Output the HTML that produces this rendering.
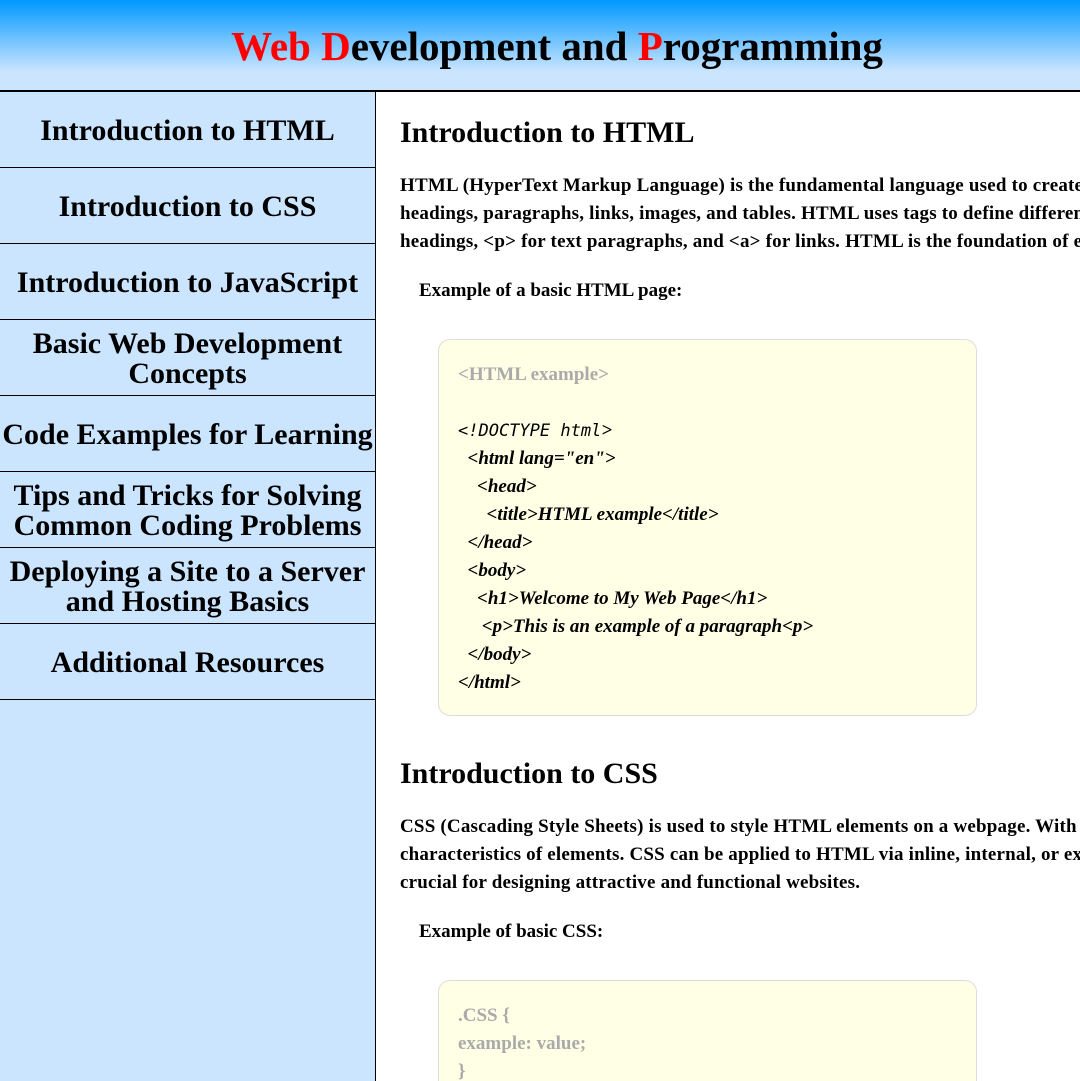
<!DOCTYPE html>
<html><head><meta charset="utf-8">
<style>
*{margin:0;padding:0;box-sizing:border-box}
html,body{width:1080px;height:1081px;overflow:hidden;background:#fff;font-family:"Liberation Serif",serif;color:#000}
.hdr{position:absolute;left:0;top:0;width:1080px;height:92px;background:linear-gradient(#0099ff 0%,#cce5ff 80%,#cce5ff 100%);border-bottom:2px solid #000;text-align:center;padding-left:34px}
.hdr h1{font-size:41px;line-height:92px;font-weight:bold}
.r{color:#ff0000}
.side{position:absolute;left:0;top:92px;width:376px;height:989px;background:#cce5ff;border-right:1px solid #000}
.side div{height:76px;border-bottom:1px solid #000;display:flex;align-items:center;justify-content:center;text-align:center;font-size:30px;font-weight:bold;line-height:30px;white-space:nowrap;padding-top:3px}
.main{position:absolute;left:400px;top:92px;width:680px;height:989px;overflow:hidden;white-space:nowrap}
h2{font-size:30px;font-weight:bold;margin-top:24px;height:40px}
p.t{font-size:19px;font-weight:bold;line-height:28px;margin-top:16px;letter-spacing:0.2px}
p.e{font-size:19px;font-weight:bold;margin:24px 0 0 19px}
.code{margin:37px 0 0 38px;width:539px;background:#ffffe6;border:1px solid #ddd;border-radius:12px;padding:21px 19px 18px;font-size:19px;font-weight:bold;font-style:italic;line-height:28px}
.g{color:#aaa;font-style:normal}
.mono{font-family:"DejaVu Sans Mono",monospace;font-weight:normal;font-size:17px}
</style></head><body>
<div class="hdr"><h1><span class="r">Web D</span>evelopment and <span class="r">P</span>rogramming</h1></div>
<div class="side">
<div>Introduction to HTML</div>
<div>Introduction to CSS</div>
<div>Introduction to JavaScript</div>
<div>Basic Web Development<br>Concepts</div>
<div>Code Examples for Learning</div>
<div>Tips and Tricks for Solving<br>Common Coding Problems</div>
<div>Deploying a Site to a Server<br>and Hosting Basics</div>
<div>Additional Resources</div>
</div>
<div class="main">
<h2>Introduction to HTML</h2>
<p class="t">HTML (HyperText Markup Language) is the fundamental language used to create web pages. It structures content such as<br>headings, paragraphs, links, images, and tables. HTML uses tags to define different elements, e.g. &lt;h1&gt; for<br>headings, &lt;p&gt; for text paragraphs, and &lt;a&gt; for links. HTML is the foundation of every website.</p>
<p class="e">Example of a basic HTML page:</p>
<div class="code">
<div class="g">&lt;HTML example&gt;</div>
<div>&nbsp;</div>
<div><span class="mono">&lt;!DOCTYPE html</span>&gt;</div>
<div>&nbsp;&nbsp;&lt;html lang="en"&gt;</div>
<div>&nbsp;&nbsp;&nbsp;&nbsp;&lt;head&gt;</div>
<div>&nbsp;&nbsp;&nbsp;&nbsp;&nbsp;&nbsp;&lt;title&gt;HTML example&lt;/title&gt;</div>
<div>&nbsp;&nbsp;&lt;/head&gt;</div>
<div>&nbsp;&nbsp;&lt;body&gt;</div>
<div>&nbsp;&nbsp;&nbsp;&nbsp;&lt;h1&gt;Welcome to My Web Page&lt;/h1&gt;</div>
<div>&nbsp;&nbsp;&nbsp;&nbsp;&nbsp;&lt;p&gt;This is an example of a paragraph&lt;p&gt;</div>
<div>&nbsp;&nbsp;&lt;/body&gt;</div>
<div>&lt;/html&gt;</div>
</div>
<h2 style="margin-top:41px">Introduction to CSS</h2>
<p class="t">CSS (Cascading Style Sheets) is used to style HTML elements on a webpage. With CSS you can change colors, fonts, layout and other<br>characteristics of elements. CSS can be applied to HTML via inline, internal, or external style sheets. Knowledge of CSS is<br>crucial for designing attractive and functional websites.</p>
<p class="e">Example of basic CSS:</p>
<div class="code" style="font-style:normal">
<div class="g">.CSS {</div>
<div class="g">example: value;</div>
<div class="g">}</div>
</div>
</div>
</body></html>
